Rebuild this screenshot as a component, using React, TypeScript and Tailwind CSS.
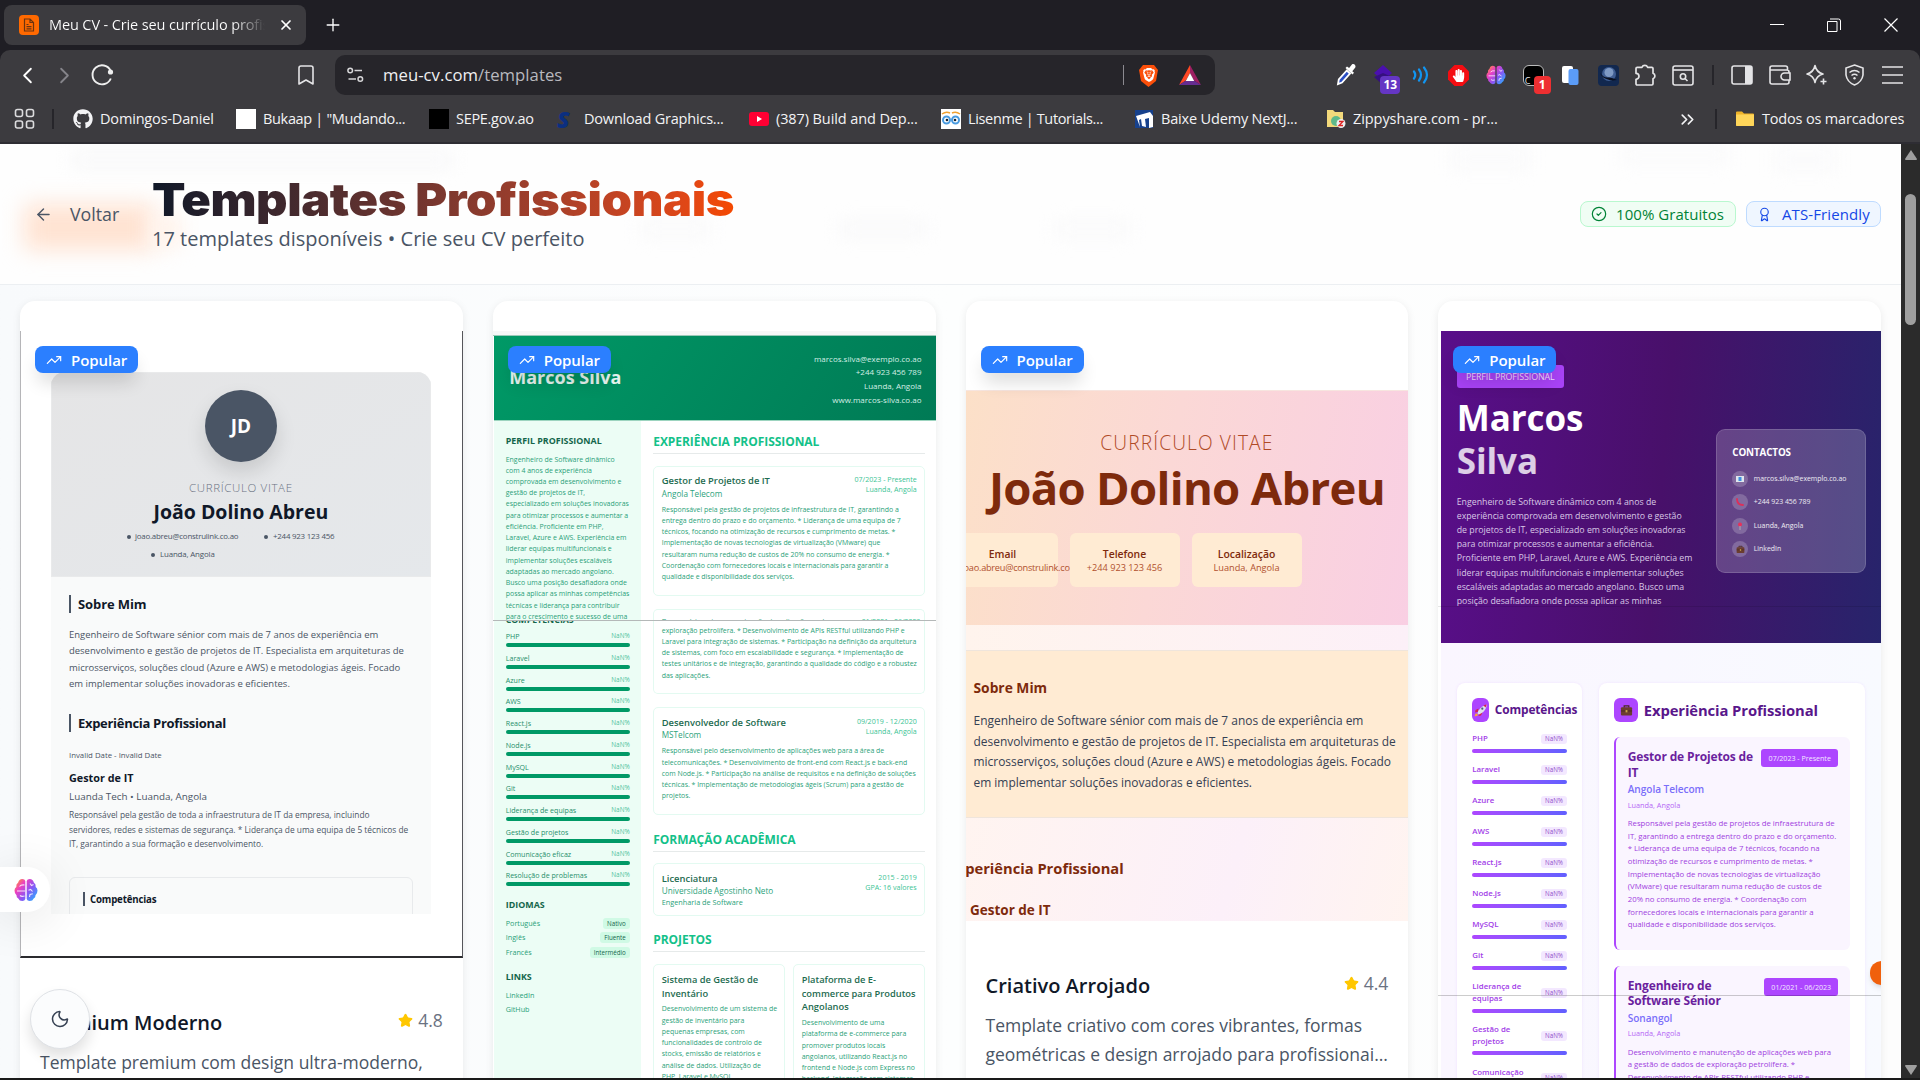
import type { ReactNode } from "react";
import {
  ArrowLeft, Award, Bookmark, ChevronLeft, ChevronRight, ChevronsRight, CircleCheck,
  Moon, Plus, Star, TrendingUp, X,
} from "lucide-react";
import { FaGithub, FaHandPaper } from "react-icons/fa";
import { SiBrave } from "react-icons/si";

/* ---------- helpers ---------- */

function Lines({ lines, className = "" }: { lines: string[]; className?: string }) {
  return (
    <div className={`whitespace-nowrap ${className}`}>
      {lines.map((l) => <div key={l}>{l}</div>)}
    </div>
  );
}

function Brain({ size }: { size: number }) {
  return (
    <svg width={size} height={size} viewBox="0 0 24 24">
      <defs>
        <linearGradient id="brain" x1="0" y1="0.1" x2="1" y2="0.9">
          <stop offset="0" stopColor="#ff9a2b" />
          <stop offset="0.28" stopColor="#ee3fc0" />
          <stop offset="0.6" stopColor="#8a55f5" />
          <stop offset="1" stopColor="#22b4ff" />
        </linearGradient>
      </defs>
      <path
        d="M11.300 3v18q-.5 2-3 2-3 0-4-2.500-2-1-1.800-3.300Q.5 15.500.5 12.500q0-2.300 1.800-3.500Q1.800 6 4.200 4.500 5 1 8.300 1q2.500 0 3 2zM12.700 3v18q.5 2 3 2 3 0 4-2.500 2-1 1.800-3.300 2-1.700 2-4.700 0-2.300-1.800-3.500.5-3-1.900-4.500Q19 1 15.700 1q-2.500 0-3 2z"
        fill="url(#brain)"
      />
      <path d="M5.500 8.500q1.500-2 5-1.500M3 13h8M6 17.500q1.500 1.500 4.500.5M16 5.500l1.500 2 2-1M18.500 13.500l-1.800-2-2.200.8M15.500 19l.5-2.500 2.800-.7" fill="none" stroke="#fff" strokeOpacity="0.85" strokeWidth="1.100" />
    </svg>
  );
}

/* ---------- browser chrome ---------- */

function TabStrip() {
  return (
    <div className="h-[50px] shrink-0 flex items-center justify-between bg-[#1f1e24] text-white">
      <div className="flex items-center pl-1">
        <div className="h-10 w-[302px] rounded-lg bg-[#3c3b3f] flex items-center pl-[15px] pr-3">
          <span className="size-5 rounded bg-[#ff6900] flex items-center justify-center">
            <svg width="12" height="14" viewBox="0 0 12 14" fill="none" stroke="#6b3410" strokeWidth="1.2">
              <path d="M1.500 1H7l3.500 3.500V13h-9zM7 1v3.500h3.500M3.500 6.500h2M3.500 8.700h5M3.500 10.800h5" />
            </svg>
          </span>
          <span className="ml-[10px] w-[216px] overflow-hidden whitespace-nowrap text-[14.5px] tracking-[-0.12px] bg-linear-to-r from-white from-85% to-transparent bg-clip-text text-transparent">
            Meu CV - Crie seu currículo profissional
          </span>
          <X className="ml-[13px] shrink-0" size={16} strokeWidth={2.6} />
        </div>
        <Plus className="ml-[17px]" size={20} strokeWidth={1.6} />
      </div>
      <div className="flex items-center pr-[22px] gap-[43px]">
        <span className="w-[14px] h-px bg-white mb-[2px]" />
        <svg width="14" height="14" viewBox="0 0 14 14" fill="none" stroke="#fff">
          <path d="M.5 3.500h9.500v10H.5zM3 1h8.500a2 2 0 0 1 2 2v9" />
        </svg>
        <svg width="14" height="14" viewBox="0 0 14 14" stroke="#fff" strokeWidth="1.2">
          <path d="M.5.500l13 13M13.500.500l-13 13" />
        </svg>
      </div>
    </div>
  );
}

function Cell({ children }: { children: ReactNode }) {
  return <div className="w-[37.5px] h-6 flex items-center justify-center">{children}</div>;
}

function Toolbar() {
  return (
    <div className="h-[50px] flex items-center">
      <ChevronLeft className="ml-[14px] text-white" size={27} strokeWidth={1.6} />
      <ChevronRight className="ml-[10px] text-[#85848a]" size={27} strokeWidth={1.6} />
      <svg className="ml-[12px]" width="24" height="24" viewBox="0 0 24 24" fill="none" stroke="#eee" strokeWidth="1.9">
        <path d="M20.500 7.500A9.500 9.500 0 1 0 20.800 15.500" />
        <circle cx="20.500" cy="9" r="2.600" fill="#eee" stroke="none" />
      </svg>
      <Bookmark className="ml-[180px] text-[#e4e4e6]" size={24} strokeWidth={1.6} />
      <div className="ml-[17px] h-10 w-[880px] rounded-[10px] bg-[#26252a] flex items-center">
        <svg className="ml-3" width="17" height="16" viewBox="0 0 17 16" fill="none" stroke="#d6d6d8" strokeWidth="1.5">
          <circle cx="3.200" cy="3.500" r="2.300" /><path d="M7.500 3.500H15" />
          <circle cx="13.300" cy="12" r="2.300" /><path d="M1.500 12H9" />
        </svg>
        <span className="ml-[19px] text-[16.7px] tracking-[0.04px] text-[#f0f0f2]">
          meu-cv.com<span className="text-[#b9b9bf]">/templates</span>
        </span>
        <span className="ml-auto w-px h-5 bg-[#8b8a90]" />
        <span className="ml-[14px] w-[21px] h-[23px] flex items-center justify-center">
          <svg width="21" height="23" viewBox="0 0 21 23" className="absolute">
            <path d="M5 1h11l4 5-2 11-7.500 6L3 17 1 6z" fill="#fb4f0a" />
          </svg>
          <SiBrave size={14} className="relative text-white" />
        </span>
        <svg className="ml-[20px] mr-[14px]" width="22" height="20" viewBox="0 0 22 20">
          <path d="M11 0 0 20l7-4.500L11 8z" fill="#ff4724" />
          <path d="M11 0l11 20-7-4.500L11 8z" fill="#9e1f63" />
          <path d="M0 20h22l-7-4.500H7z" fill="#662d91" />
          <path d="M11 8l4.200 8H6.800z" fill="#fff" />
        </svg>
      </div>
      <div className="ml-[112px] flex shrink-0 items-center text-[#e4e4e6]">
        <Cell>
          <svg width="22" height="24" viewBox="0 0 22 24">
            <path d="M3 21l.8-4.500 8-9 3.200 3-8 9z" fill="#2a4fc4" stroke="#fff" strokeWidth="1.800" />
            <path d="M10.500 5l7 6.500 1.500-1.700-1.700-1.600 3-3.700c1-2-1.200-4.300-3.200-3.200l-3 3.600L12 3.400z" fill="#fff" />
          </svg>
        </Cell>
        <Cell>
          <span className="relative">
            <svg width="22" height="20" viewBox="0 0 22 20"><path d="M11 0l9 8-9 8-9-8z" fill="#4a0fae" /><path d="M2 12l9-4 9 4-9 8z" fill="#35107f" /></svg>
            <span className="absolute left-[8px] top-[11px] w-5 h-[18px] rounded bg-[#6536c4] text-white text-[12px] font-bold leading-[18px] text-center">13</span>
          </span>
        </Cell>
        <Cell>
          <svg width="18" height="18" viewBox="0 0 18 18" fill="none" stroke="#1195f0" strokeWidth="2.200" strokeLinecap="round">
            <path d="M2 5.500q2.500 3.500 0 7M7 3.500q4 5.500 0 11M12 1.500q6 7.500 0 15" />
          </svg>
        </Cell>
        <Cell>
          <svg width="21" height="21" viewBox="0 0 21 21" className="absolute"><path d="M6.500 0h8L21 6.500v8L14.500 21h-8L0 14.500v-8z" fill="#f40d12" /></svg>
          <FaHandPaper size={13} className="relative text-white" />
        </Cell>
        <Cell><Brain size={20} /></Cell>
        <Cell>
          <span className="relative block size-[21px] rounded-md border border-[#bbb] bg-black">
            <span className="absolute left-px bottom-0 text-[9px] leading-[9px]">C</span>
            <span className="absolute left-[10px] top-[10px] w-[17px] h-[18px] rounded bg-[#ee2f31] text-white text-[12px] font-bold leading-[18px] text-center">1</span>
          </span>
        </Cell>
        <Cell>
          <svg width="17" height="19" viewBox="0 0 17 19"><rect width="11" height="17" rx="2" fill="#fff" /><rect x="6.500" y="3" width="10" height="16" rx="2" fill="#5b9cf8" /></svg>
        </Cell>
        <Cell>
          <svg width="21" height="21" viewBox="0 0 21 21">
            <rect width="21" height="21" rx="4" fill="#12284f" />
            <circle cx="11" cy="9" r="7" fill="#3f5d92" /><circle cx="11" cy="7.500" r="4.500" fill="#7f9ac4" />
            <path d="M2 8q4 5 8 4.500 4-.5 9 2.500-6 1-9-.5-6-1.500-8-6.500z" fill="#0a1020" />
          </svg>
        </Cell>
        <Cell>
          <svg width="23" height="24" viewBox="0 0 23 24" fill="none" stroke="currentColor" strokeWidth="1.700" strokeLinejoin="round">
            <path d="M2 5.500q0-1.200 1.200-1.200H8a3 3 0 0 1 5.600 0h4.200q1.200 0 1.200 1.200v4.700a3 3 0 0 1 0 5.600v5q0 1.200-1.200 1.200H3.200Q2 22 2 20.800v-4.500a3 3 0 0 0 0-6z" />
          </svg>
        </Cell>
        <Cell>
          <svg width="22" height="21" viewBox="0 0 22 21" fill="none" stroke="currentColor" strokeWidth="1.600">
            <rect x="1" y="1" width="20" height="19" rx="2" /><path d="M1 5h20" /><circle cx="11" cy="11.500" r="2.700" /><path d="M13 13.500l2.500 2.500" />
          </svg>
        </Cell>
        <span className="w-[21.5px] flex justify-center"><span className="w-[2px] h-5 bg-[#26252a]" /></span>
        <Cell>
          <svg width="22" height="20" viewBox="0 0 22 20"><rect x="1" y="1" width="20" height="18" rx="2" fill="none" stroke="currentColor" strokeWidth="1.600" /><path d="M14 1h7v18h-7z" fill="currentColor" /></svg>
        </Cell>
        <Cell>
          <svg width="22" height="20" viewBox="0 0 22 20" fill="none" stroke="currentColor" strokeWidth="1.600">
            <path d="M18.500 5V3a2 2 0 0 0-2-2H3a2 2 0 0 0-2 2v14a2 2 0 0 0 2 2h15a2 2 0 0 0 2-2v-2M1 5h17a2 2 0 0 1 2 2v1M21 8h-5.500a3.500 3.500 0 0 0 0 7H21z" />
          </svg>
        </Cell>
        <Cell>
          <svg width="22" height="22" viewBox="0 0 22 22" fill="none" stroke="currentColor" strokeWidth="1.600" strokeLinejoin="round">
            <path d="M9 1.500q1.500 7 8 8.500-6.500 1.500-8 8.500-1.500-7-8-8.500 6.500-1.500 8-8.500z" /><path d="M17.500 14.500v6M14.500 17.500h6" />
          </svg>
        </Cell>
        <Cell>
          <svg width="21" height="22" viewBox="0 0 21 22" fill="none" stroke="currentColor" strokeWidth="1.600">
            <path d="M10.500 1 19 4v7q-1 7-8.500 10Q3 18 2 11V4z" /><path d="M5.500 8.500q5-4 10 0M7.500 11.500q3-2.400 6 0" /><circle cx="10.500" cy="14.300" r="1.200" fill="currentColor" stroke="none" />
          </svg>
        </Cell>
        <Cell>
          <svg width="21" height="18" viewBox="0 0 21 18" stroke="currentColor" strokeWidth="1.600"><path d="M0 1h21M0 9h21M0 17h21" /></svg>
        </Cell>
      </div>
    </div>
  );
}

function Mark({ icon, label, className }: { icon: ReactNode; label: string; className: string }) {
  return (
    <div className={`flex shrink-0 items-center whitespace-nowrap ${className}`}>
      <span className="w-[27px] shrink-0 flex">{icon}</span>
      {label}
    </div>
  );
}

function BookmarksBar() {
  return (
    <div className="h-[42px] flex items-center pb-1 text-[14.5px] tracking-[-0.17px] text-[#f3f3f5]">
      <svg className="ml-[14px]" width="22" height="22" viewBox="0 0 22 22" fill="none" stroke="#dcdcde" strokeWidth="1.600">
        <rect x="1.500" y="1.500" width="7" height="7" rx="2" /><rect x="12.500" y="1.500" width="7" height="7" rx="2" />
        <rect x="1.500" y="13" width="7" height="7" rx="2" /><rect x="12.500" y="13" width="7" height="7" rx="2" />
      </svg>
      <span className="ml-4 w-[2px] h-5 bg-[#26252a]" />
      <Mark className="ml-[19px] w-[163px]" label="Domingos-Daniel" icon={<FaGithub size={20} />} />
      <Mark className="w-[193px] tracking-[-0.33px]" label={'Bukaap | "Mudando...'} icon={<span className="size-5 bg-white" />} />
      <Mark className="w-[128px] tracking-[-0.3px]" label="SEPE.gov.ao" icon={<span className="size-5 bg-black" />} />
      <Mark className="w-[192px] tracking-[-0.2px]" label="Download Graphics..." icon={<span className="w-5 text-[23px] leading-5 font-extrabold italic text-[#0b2f80]">S</span>} />
      <Mark className="w-[192px] tracking-[-0.1px]" label="(387) Build and Dep..." icon={
        <svg width="20" height="20" viewBox="0 0 20 20"><rect y="3" width="20" height="14" rx="3" fill="#ff0033" /><path d="M8 7l5 3-5 3z" fill="#fff" /></svg>
      } />
      <Mark className="w-[193px] tracking-[-0.35px]" label="Lisenme | Tutorials..." icon={
        <svg width="20" height="20" viewBox="0 0 20 20">
          <rect width="20" height="20" fill="#fff" />
          <path d="M1 5q4-3 8-1M11 4q4-2 8 1" stroke="#f0a030" strokeWidth="1.500" fill="none" />
          <circle cx="5.500" cy="11" r="3.500" fill="#fff" stroke="#4a9be0" strokeWidth="2" /><circle cx="14.500" cy="11" r="3.500" fill="#fff" stroke="#4a9be0" strokeWidth="2" />
          <circle cx="6" cy="11" r="1.300" fill="#123" /><circle cx="14" cy="11" r="1.300" fill="#123" />
        </svg>
      } />
      <Mark className="w-[192px]" label="Baixe Udemy NextJ..." icon={
        <svg width="20" height="20" viewBox="0 0 20 20"><rect x="1" y="1" width="18" height="18" fill="#17418c" /><path d="M2 7l14-4 3 4v11l-4 1V9l-4 1 1 8-4-1-1-7-2 1 1 7z" fill="#fff" /></svg>
      } />
      <Mark className="w-[356px] tracking-[-0.07px]" label="Zippyshare.com - pr..." icon={
        <svg width="20" height="20" viewBox="0 0 20 20">
          <path d="M1 1h6l2 2h8v15H1z" fill="#f3d97b" /><circle cx="10" cy="12" r="5" fill="#5fb98a" /><circle cx="15" cy="14.500" r="4.500" fill="#eee" /><path d="M13 12.500h4l-4 4h4" stroke="#d22" strokeWidth="1.300" fill="none" />
        </svg>
      } />
      <ChevronsRight className="-ml-[5px]" size={21} strokeWidth={1.9} />
      <span className="ml-[17px] w-[2px] h-5 bg-[#26252a]" />
      <Mark className="ml-[18px]" label="Todos os marcadores" icon={
        <svg width="20" height="20" viewBox="0 0 20 20"><path d="M1 3.500q0-1 1-1h5l2 2h9q1 0 1 1V16q0 1-1 1H2q-1 0-1-1z" fill="#f0b429" /><path d="M1 5.500h18V16q0 1-1 1H2q-1 0-1-1z" fill="#ffd65a" /></svg>
      } />
    </div>
  );
}

/* ---------- page header ---------- */

function PageHeader() {
  return (
    <header className="relative h-[141px] shrink-0 overflow-hidden border-b border-[#eceff2] bg-[#fefefe] flex items-center justify-between px-5">
      <div className="absolute left-[24px] top-[60px] w-[130px] h-[46px] bg-[#ffe3d2] blur-[11px]" />
      <div className="absolute left-[150px] top-[70px] w-[32px] h-[34px] bg-[#fff3eb] blur-[10px]" />
      <div className="absolute left-[72px] top-[8px] w-[380px] h-[16px] bg-[#f8f8f9] blur-[9px]" />
      <div className="absolute left-[640px] top-[78px] w-[70px] h-[14px] bg-[#f9f9fa] blur-[9px]" />
      <div className="absolute left-[840px] top-[78px] w-[85px] h-[14px] bg-[#f8f8f9] blur-[9px]" />
      <div className="absolute left-[1055px] top-[78px] w-[75px] h-[14px] bg-[#f9f9fa] blur-[9px]" />
      <div className="absolute left-[1450px] top-[6px] w-[80px] h-[18px] bg-[#fafafb] blur-[9px]" />
      <div className="absolute left-[1620px] top-[4px] w-[110px] h-[14px] bg-[#fafafb] blur-[9px]" />
      <div className="absolute left-[1775px] top-[6px] w-[60px] h-[20px] bg-[#fafafb] blur-[9px]" />
      <div className="relative flex items-center">
        <button className="flex items-center pl-[14px] text-[17.8px] text-[#4a5565]">
          <ArrowLeft size={19} strokeWidth={1.8} />
          <span className="ml-[17px] w-[82px] text-left">Voltar</span>
        </button>
        <div className="whitespace-nowrap">
          <h1 className="w-[537px] h-[48px] leading-[48px] origin-left scale-x-[1.085] font-['Inter'] font-black text-[45px] tracking-[-0.4px] bg-linear-to-r from-[#101828] to-[#f54900] bg-clip-text text-transparent">
            Templates Profissionais
          </h1>
          <p className="text-[20px] leading-[29px] text-[#4a5565]">17 templates disponíveis • Crie seu CV perfeito</p>
        </div>
      </div>
      <div className="relative flex gap-[10px] text-[15px] font-medium">
        <span className="h-[26px] w-[156px] rounded-lg border border-[#b9f8cf] bg-[#f0fdf4] text-[#008236] flex items-center pl-[10px]">
          <CircleCheck size={16} strokeWidth={1.8} /><span className="ml-[9px] tracking-[0.05px]">100% Gratuitos</span>
        </span>
        <span className="h-[26px] w-[135px] rounded-lg border border-[#bedbff] bg-[#eff6ff] text-[#1447e6] flex items-center pl-[10px]">
          <Award size={15} strokeWidth={1.8} /><span className="ml-[10px] tracking-[0.1px]">ATS-Friendly</span>
        </span>
      </div>
    </header>
  );
}

/* ---------- template cards ---------- */

function Card({ children }: { children: ReactNode }) {
  return (
    <article className="relative h-[850px] min-w-0 overflow-hidden rounded-[15px] bg-white pt-[30px] shadow-[0_2px_8px_rgba(0,0,0,0.08)]">
      {children}
      <span className="absolute left-[15px] top-[45px] w-[103px] h-[27px] rounded-lg bg-[#2b7fff] text-white text-[15px] font-semibold tracking-[-0.05px] flex items-center pl-[11px] shadow-[0_12px_18px_-3px_rgba(0,0,0,0.14)]">
        <TrendingUp size={16} strokeWidth={1.8} /><span className="ml-[9px] pt-px">Popular</span>
      </span>
    </article>
  );
}

function Info({ title, rating, lines }: { title: string; rating: string; lines: string[] }) {
  return (
    <div className="px-5 pt-[49px]">
      <div className="flex h-[30px] items-center justify-between">
        <h3 className="pt-[2px] text-[20px] font-semibold text-[#101828] whitespace-nowrap">{title}</h3>
        <span className="flex items-center gap-[5px] pb-1 text-[17.5px] text-[#6a7282]">
          <Star size={15} fill="#ffc700" stroke="#ffc700" />{rating}
        </span>
      </div>
      <Lines className="mt-[11px] text-[17.5px] leading-[28.8px] text-[#4a5565]" lines={lines} />
    </div>
  );
}

function PremiumCard() {
  return (
    <Card>
      <div className="h-[627px] border-l border-l-[#b5b5b8] border-r border-r-[#55555a] border-b-[2px] border-b-[#2b2b2e] pt-[41px] pl-[30px] pr-[31px]">
        <div className="h-[542px] overflow-hidden rounded-t-[14px] bg-[#f9fafa] text-[#4a5565]">
          <div className="h-[205px] bg-linear-to-br from-[#e5e5e6] to-[#e5e8eb] pt-[18px] shadow-[inset_0_0_0_1px_#e9eaeb]">
            <div className="mx-auto size-[72px] rounded-full bg-[#4a5565] text-white font-bold text-[19px] pt-px flex items-center justify-center shadow-[0_10px_20px_rgba(0,0,0,0.13)]">JD</div>
            <div className="mt-[18px] h-4 leading-4 text-center text-[11.5px] font-light tracking-[0.65px] text-[#6a7282]">CURRÍCULO VITAE</div>
            <div className="h-[30px] leading-[32px] text-center text-[19.5px] font-bold text-[#101828] whitespace-nowrap">João Dolino Abreu</div>
            <div className="mt-[2px] h-[18px] flex items-center text-[7.9px] tracking-[-0.22px] whitespace-nowrap pl-[76px]">
              <span className="size-[4px] rounded-full bg-[#4a5565]" /><span className="ml-1 w-[129px]">joao.abreu@construlink.co.ao</span>
              <span className="size-[4px] rounded-full bg-[#4a5565]" /><span className="ml-[5px]">+244 923 123 456</span>
            </div>
            <div className="h-[18px] flex items-center text-[7.9px] tracking-[-0.15px] whitespace-nowrap pl-[100px]">
              <span className="size-[4px] rounded-full bg-[#4a5565]" /><span className="ml-[5px]">Luanda, Angola</span>
            </div>
          </div>
          <div className="pl-[18px] whitespace-nowrap">
            <div className="mt-[18px] h-[18px] leading-[19px] border-l-2 border-[#4a5565] pl-[7px] text-[13px] tracking-[-0.1px] font-bold text-[#101828]">Sobre Mim</div>
            <Lines className="mt-[14px] text-[9.48px] leading-[16.3px]" lines={[
              "Engenheiro de Software sénior com mais de 7 anos de experiência em",
              "desenvolvimento e gestão de projetos de IT. Especialista em arquiteturas de",
              "microsserviços, soluções cloud (Azure e AWS) e metodologias ágeis. Focado",
              "em implementar soluções inovadoras e eficientes.",
            ]} />
            <div className="mt-[22px] h-[18px] leading-[19px] border-l-2 border-[#4a5565] pl-[7px] text-[13px] tracking-[-0.3px] font-bold text-[#101828]">Experiência Profissional</div>
            <div className="mt-[17px] text-[7.8px] leading-[12px] font-medium">Invalid Date - Invalid Date</div>
            <div className="mt-[9px] text-[10.8px] leading-4 font-bold text-[#101828]">Gestor de IT</div>
            <div className="mt-[3px] text-[9.85px] leading-[14px] font-medium">Luanda Tech • Luanda, Angola</div>
            <Lines className="mt-[5px] text-[8.37px] leading-[14.6px]" lines={[
              "Responsável pela gestão de toda a infraestrutura de IT da empresa, incluindo",
              "servidores, redes e sistemas de segurança. * Liderança de uma equipa de 5 técnicos de",
              "IT, garantindo a sua formação e desenvolvimento.",
            ]} />
            <div className="mt-[25.5px] w-[344px] h-[60px] rounded-md border border-[#e8eaec] pt-[14px] pl-[13px]">
              <div className="h-[14px] leading-[15px] border-l-2 border-[#4a5565] pl-[5px] text-[9.7px] tracking-[-0.18px] font-bold text-[#101828]">Competências</div>
            </div>
          </div>
        </div>
      </div>
      <Info title="Premium Moderno" rating="4.8" lines={["Template premium com design ultra-moderno,", "elegante e sofisticado para executivos"]} />
    </Card>
  );
}

const skills = ["PHP", "Laravel", "Azure", "AWS", "React.js", "Node.js", "MySQL", "Git", "Liderança de equipas", "Gestão de projetos", "Comunicação eficaz", "Resolução de problemas"];
const idiomas = [["Português", "Nativo"], ["Inglês", "Fluente"], ["Francês", "Intermédio"]];

function GreenHeading({ children, className }: { children: string; className: string }) {
  return (
    <div className={`h-[21px] border-b border-[#e6eaea] text-[12px] leading-[17px] tracking-[-0.06px] font-bold text-[#13c189] ${className}`}>{children}</div>
  );
}

function GreenEntry({ title, sub, extra, date, place, lines, className }: {
  title: string; sub: string; extra?: string; date: string; place: string; lines?: string[]; className: string;
}) {
  return (
    <div className={`rounded-[5px] border border-[#e3faf1] pl-[7.5px] pr-[7.5px] ${className}`}>
      <div className="flex justify-between">
        <div className="pt-[8.5px]">
          <div className="text-[9.4px] leading-[12px] font-semibold text-[#1d6b50]">{title}</div>
          <div className="mt-[0.5px] text-[8.2px] leading-[12px] font-medium text-[#2da37c]">{sub}</div>
          {extra && <div className="text-[7.3px] leading-[10px]">{extra}</div>}
        </div>
        <div className="pt-[7.5px] text-right text-[7.1px] leading-[10px] text-[#3bc495]">
          <div className="font-medium">{date}</div>
          <div>{place}</div>
        </div>
      </div>
      {lines && <Lines className="mt-[4px] text-[6.95px] leading-[11.25px]" lines={lines} />}
    </div>
  );
}

function GreenCard() {
  return (
    <Card>
      <div className="h-[5px] bg-[#f6f7f7] border-b border-[#9cc9b9]" />
      <div className="ml-px h-[85px] border-b border-[#9cd4bf] bg-[linear-gradient(125deg,#009966,#007a55)] flex justify-between pl-[15.5px] pr-[14px] text-white">
        <div className="pt-[29px] text-[18px] leading-[24px] font-bold text-white/90">Marcos Silva</div>
        <Lines className="pt-[15.500px] text-right text-[8px] leading-[13.8px] text-[#d3efe5]" lines={["marcos.silva@exemplo.co.ao", "+244 923 456 789", "Luanda, Angola", "www.marcos-silva.co.ao"]} />
      </div>
      <div className="h-[199px] overflow-hidden flex text-[#2a9f79] whitespace-nowrap">
        <div className="ml-px w-[147px] shrink-0 bg-[#ecfdf5] pt-[13px] pl-[12px]">
          <div className="text-[8.9px] leading-[13px] h-[12px] font-bold text-[#14664b]">PERFIL PROFISSIONAL</div>
          <Lines className="mt-[7.500px] text-[6.95px] leading-[11.23px]" lines={[
            "Engenheiro de Software dinâmico", "com 4 anos de experiência", "comprovada em desenvolvimento e", "gestão de projetos de IT,",
            "especializado em soluções inovadoras", "para otimizar processos e aumentar a", "eficiência. Proficiente em PHP,", "Laravel, Azure e AWS. Experiência em",
            "liderar equipas multifuncionais e", "implementar soluções escaláveis", "adaptadas ao mercado angolano.", "Busco uma posição desafiadora onde",
            "possa aplicar as minhas competências", "técnicas e liderança para contribuir", "para o crescimento e sucesso de uma",
          ]} />
        </div>
        <div className="ml-[12.5px] w-[272px]">
          <GreenHeading className="mt-[12px]">EXPERIÊNCIA PROFISSIONAL</GreenHeading>
          <GreenEntry className="mt-[11.5px] h-[130.5px]" title="Gestor de Projetos de IT" sub="Angola Telecom" date="07/2023 - Presente" place="Luanda, Angola" lines={[
            "Responsável pela gestão de projetos de infraestrutura de IT, garantindo a",
            "entrega dentro do prazo e do orçamento. * Liderança de uma equipa de 7",
            "técnicos, focando na otimização de recursos e cumprimento de metas. *",
            "Implementação de novas tecnologias de virtualização (VMware) que",
            "resultaram numa redução de custos de 20% no consumo de energia. *",
            "Coordenação com fornecedores locais e internacionais para garantir a",
            "qualidade e disponibilidade dos serviços.",
          ]} />
          <div className="mt-[12.5px] h-[13px] rounded-t-[5px] border border-b-0 border-[#e3faf1] px-[7.5px] overflow-hidden">
            <div className="mt-[6px] flex justify-between text-[6.95px] leading-[11.25px]">
              <span>Desenvolvimento e manutenção de aplicações web para a ges</span><span className="text-[#3bc495]">01/2021 - 06/2023</span>
            </div>
          </div>
        </div>
      </div>
      <div className="h-px bg-[#b4b8b8]" />
      <div className="h-[520px] flex text-[#2a9f79] whitespace-nowrap">
        <div className="ml-px w-[147px] shrink-0 bg-[#ecfdf5] pl-[12px] pr-[11px]">
          <div className="h-[9px] overflow-hidden"><div className="-mt-[7px] text-[8.8px] leading-[12px] font-bold text-[#14664b]">COMPETÊNCIAS</div></div>
          {skills.map((s) => (
            <div key={s} className="h-[21.75px]">
              <div className="flex justify-between text-[7.1px] leading-[12.6px] h-[12px] font-medium text-[#1f8f6b]"><span>{s}</span><span className="text-[6.4px] font-normal text-[#4fc29c]">NaN%</span></div>
              <div className="mt-px h-[4px] rounded-full bg-[#009966]" />
            </div>
          ))}
          <div className="mt-[8px] text-[8.9px] leading-[12px] font-bold text-[#14664b]">IDIOMAS</div>
          <div className="mt-[5px]">
            {idiomas.map(([l, n]) => (
              <div key={l} className="h-[14.6px] flex items-center justify-between text-[7.2px]">
                <span>{l}</span><span className="h-[11px] leading-[11px] rounded-[3px] bg-[#d0fae5] px-1 text-[6.2px] font-medium text-[#14664b]">{n}</span>
              </div>
            ))}
          </div>
          <div className="mt-[11px] text-[8.9px] leading-[12px] font-bold text-[#14664b]">LINKS</div>
          <Lines className="mt-[5px] text-[7.2px] leading-[14px]" lines={["LinkedIn", "GitHub"]} />
        </div>
        <div className="ml-[12.5px] w-[272px]">
          <div className="h-[73.3px] rounded-b-[5px] border border-t-0 border-[#e3faf1] pl-[7.5px] pt-[3.7px]">
            <Lines className="text-[6.95px] leading-[11.25px]" lines={[
              "exploração petrolífera. * Desenvolvimento de APIs RESTful utilizando PHP e",
              "Laravel para integração de sistemas. * Participação na definição da arquitetura",
              "de sistemas, com foco em escalabilidade e segurança. * Implementação de",
              "testes unitários e de integração, garantindo a qualidade do código e a robustez",
              "das aplicações.",
            ]} />
          </div>
          <GreenEntry className="mt-[13px] h-[107.4px]" title="Desenvolvedor de Software" sub="MSTelcom" date="09/2019 - 12/2020" place="Luanda, Angola" lines={[
            "Responsável pelo desenvolvimento de aplicações web para a área de",
            "telecomunicações. * Desenvolvimento de front-end com React.js e back-end",
            "com Node.js. * Participação na análise de requisitos e na definição de soluções",
            "técnicas. * Implementação de metodologias ágeis (Scrum) para a gestão de",
            "projetos.",
          ]} />
          <GreenHeading className="mt-[16.3px]">FORMAÇÃO ACADÊMICA</GreenHeading>
          <GreenEntry className="mt-[11.5px] h-[52.2px]" title="Licenciatura" sub="Universidade Agostinho Neto" extra="Engenharia de Software" date="2015 - 2019" place="GPA: 16 valores" />
          <GreenHeading className="mt-[15.5px]">PROJETOS</GreenHeading>
          <div className="mt-[12px] grid grid-cols-2 gap-2">
            <div className="h-[160px] rounded-[5px] border border-[#e3faf1] pl-[7.5px] pt-[7.6px]">
              <Lines className="text-[9.3px] leading-[13.8px] font-semibold text-[#1d6b50]" lines={["Sistema de Gestão de", "Inventário"]} />
              <Lines className="mt-[3px] text-[6.95px] leading-[11.25px]" lines={["Desenvolvimento de um sistema de", "gestão de inventário para", "pequenas empresas, com", "funcionalidades de controlo de", "stocks, emissão de relatórios e", "análise de dados. Utilização de", "PHP, Laravel e MySQL."]} />
            </div>
            <div className="h-[160px] rounded-[5px] border border-[#e3faf1] pl-[7.5px] pt-[7.6px]">
              <Lines className="text-[9.3px] leading-[13.8px] font-semibold text-[#1d6b50]" lines={["Plataforma de E-", "commerce para Produtos", "Angolanos"]} />
              <Lines className="mt-[3px] text-[6.95px] leading-[11.25px]" lines={["Desenvolvimento de uma", "plataforma de e-commerce para", "promover produtos locais", "angolanos, utilizando React.js no", "frontend e Node.js com Express no", "backend. Integração com sistemas"]} />
            </div>
          </div>
        </div>
      </div>
    </Card>
  );
}

function ContactTile({ label, value, className = "text-center" }: { label: string; value: string; className?: string }) {
  return (
    <div className="relative w-[110px] h-[54px] shrink-0 rounded-md bg-[#ffebd3] pt-[14px] whitespace-nowrap leading-[14px]">
      <div className="text-center text-[10.4px] font-semibold text-[#7e2a0c]">{label}</div>
      <div className={`text-[9.2px] text-[#b1502e] ${className}`}>{value}</div>
    </div>
  );
}

function CreativeCard() {
  return (
    <Card>
      <div className="h-[590px] overflow-hidden pt-[59px] whitespace-nowrap">
        <div className="h-[235px] border-t border-[#f7e5df] bg-[linear-gradient(100deg,#fce0c8_0%,#fbd8d6_45%,#f9cfe3_100%)] pt-[36px]">
          <div className="h-[30px] leading-[31px] text-center text-[19.2px] font-light tracking-[1.1px] text-[#b04a26]">CURRÍCULO VITAE</div>
          <div className="h-[58px] leading-[60px] flex justify-center text-[45.5px] font-bold tracking-[-0.7px] text-[#7e2a0c]">João Dolino Abreu</div>
          <div className="mt-[18px] -ml-[18px] flex gap-3">
            <ContactTile label="Email" value="joao.abreu@construlink.co.ao" className="pl-[14px] tracking-[-0.25px]" />
            <ContactTile label="Telefone" value="+244 923 123 456" />
            <ContactTile label="Localização" value="Luanda, Angola" />
          </div>
        </div>
        <div className="h-[25px] bg-linear-to-r from-[#fff4ed] to-[#fcf0f8]" />
        <div className="h-[168px] border-y border-[#efe5dc] bg-[#ffebd3] pl-[8px] pt-[27px]">
          <div className="text-[13.8px] leading-5 font-bold text-[#7e2a0c]">Sobre Mim</div>
          <Lines className="mt-[13px] text-[11.95px] leading-[20.7px] text-[#364153]" lines={[
            "Engenheiro de Software sénior com mais de 7 anos de experiência em",
            "desenvolvimento e gestão de projetos de IT. Especialista em arquiteturas de",
            "microsserviços, soluções cloud (Azure e AWS) e metodologias ágeis. Focado",
            "em implementar soluções inovadoras e eficientes.",
          ]} />
        </div>
        <div className="h-[103px] bg-[linear-gradient(105deg,#fff4f0_0%,#fcf0f9_60%,#fff4f0_100%)] pt-[40px] font-bold text-[#7e2a0c]">
          <div className="-ml-[17px] text-[14.7px] leading-5">Experiência Profissional</div>
          <div className="mt-[22.5px] pl-[4.5px] text-[13.5px] leading-[18px]">Gestor de IT</div>
        </div>
      </div>
      <Info title="Criativo Arrojado" rating="4.4" lines={["Template criativo com cores vibrantes, formas", "geométricas e design arrojado para profissionai..."]} />
    </Card>
  );
}

const purpleSkills = [["PHP"], ["Laravel"], ["Azure"], ["AWS"], ["React.js"], ["Node.js"], ["MySQL"], ["Git"], ["Liderança de", "equipas"], ["Gestão de", "projetos"], ["Comunicação", "eficaz"]];

function Briefcase({ size }: { size: number }) {
  return (
    <svg width={size} height={size} viewBox="0 0 14 14">
      <path d="M4.500 4V2h5v2" fill="none" stroke="#4a2a22" strokeWidth="1.300" />
      <rect x="1" y="3.500" width="12" height="9" rx="1.200" fill="#6b3d30" /><path d="M1 7.500h12" stroke="#4a2a22" /><rect x="6" y="6.500" width="2" height="2.500" fill="#c9a54b" />
    </svg>
  );
}

const contacts: { text: string; icon: ReactNode }[] = [
  { text: "marcos.silva@exemplo.co.ao", icon: <svg width="8" height="8" viewBox="0 0 8 8"><rect y="1" width="8" height="6" fill="#dfe6ee" /><rect x="2.500" y="2" width="3" height="4" fill="#3d8fe0" /></svg> },
  { text: "+244 923 456 789", icon: <svg width="8" height="8" viewBox="0 0 8 8"><path d="M1 1q0 6 6 6" fill="none" stroke="#dd2e5a" strokeWidth="1.800" strokeLinecap="round" /></svg> },
  { text: "Luanda, Angola", icon: <svg width="8" height="8" viewBox="0 0 8 8"><circle cx="4" cy="2.500" r="2" fill="#e8305a" /><path d="M4 4v4" stroke="#bbb" strokeWidth="0.800" /></svg> },
  { text: "LinkedIn", icon: <Briefcase size={9} /> },
];

function PurpleEntry({ title, company, date, badge, lines, className }: {
  title: string[]; company: string; date: string; badge: string; lines: string[]; className: string;
}) {
  return (
    <div className={`w-[236px] rounded-md border-l-2 border-[#ad46ff] bg-[#faf5ff] pl-[11.5px] pr-[12px] pt-[12px] whitespace-nowrap ${className}`}>
      <div className="flex justify-between">
        <Lines className="text-[12px] leading-[15.5px] font-bold tracking-[-0.15px] text-[#6b1f9e]" lines={title} />
        <span className={`shrink-0 h-[18px] leading-[18px] rounded-[3px] bg-[#ad46ff] text-center text-[7.1px] font-medium text-[#f3e8ff] ${badge}`}>{date}</span>
      </div>
      <div className="mt-[2px] text-[10.1px] leading-[14px] font-semibold tracking-[-0.05px] text-[#7a6ffa]">{company}</div>
      <div className="mt-[2.5px] text-[7.3px] leading-[12px] text-[#b566f5]">Luanda, Angola</div>
      <Lines className="mt-[6.5px] text-[7.77px] leading-[12.65px] text-[#a040e0]" lines={lines} />
    </div>
  );
}

function PurpleCard() {
  return (
    <Card>
      <div className="ml-[3px] h-[312px] bg-[linear-gradient(95deg,#590e8a_0%,#48106a_50%,#27246b_100%)] flex whitespace-nowrap">
        <div className="w-[275px] shrink-0 pl-[15.5px] pt-[34px]">
          <div className="w-[107px] h-[22.5px] leading-[23px] rounded-[3px] bg-[#a943f8] text-center text-[8.9px] tracking-[-0.1px] text-[#eedcff]">PERFIL PROFISSIONAL</div>
          <div className="mt-[8px] text-[35px] leading-[43.8px] font-bold tracking-[-0.1px] text-white">Marcos<br /><span className="text-white/80">Silva</span></div>
          <Lines className="mt-[11.5px] text-[8.77px] leading-[14.2px] text-[#d9c8e6]" lines={[
            "Engenheiro de Software dinâmico com 4 anos de", "experiência comprovada em desenvolvimento e gestão", "de projetos de IT, especializado em soluções inovadoras",
            "para otimizar processos e aumentar a eficiência.", "Proficiente em PHP, Laravel, Azure e AWS. Experiência em", "liderar equipas multifuncionais e implementar soluções",
            "escaláveis adaptadas ao mercado angolano. Busco uma", "posição desafiadora onde possa aplicar as minhas",
          ]} />
        </div>
        <div className="mt-[98px] w-[150px] h-[143.5px] rounded-[9px] border border-white/15 bg-white/20 pl-[15px] pt-[15.5px] text-white">
          <div className="text-[9.8px] leading-[14px] font-bold tracking-[-0.1px]">CONTACTOS</div>
          <div className="mt-[8px]">
            {contacts.map((c) => (
              <div key={c.text} className="h-[23.3px] flex items-center text-[6.9px] text-white/90">
                <span className="mr-[5.5px] size-4 rounded-full bg-white/20 flex items-center justify-center">{c.icon}</span>{c.text}
              </div>
            ))}
          </div>
        </div>
      </div>
      <div className="ml-[3px] h-[520px] bg-linear-to-r from-[#faf6ff] to-[#f8faff] flex gap-[17px] pl-4 pt-[40px]">
        <div className="w-[125px] shrink-0 rounded-t-[8px] bg-white pl-[15px] pt-[15px] shadow-[0_0_3px_rgba(173,70,255,0.12)]">
          <div className="h-6 flex items-center">
            <span className="w-[17px] h-6 shrink-0 rounded-md bg-[#ad46ff] flex items-center justify-center">
              <svg width="13" height="13" viewBox="0 0 13 13">
                <path d="M4.500 4.500L1.500 6 1 8.500l3-.8zM8.500 8.500L7 11.500l-2.500.5.800-3z" fill="#d3244f" />
                <path d="M3.500 9.500q1-6 9-9 .5 1-.5 3.500-2 4.500-7 6.500z" fill="#dfe4ea" />
                <path d="M9.500 1.500q1.500-.8 3-1 0 1.500-1 3z" fill="#d3244f" />
                <circle cx="8.300" cy="4.700" r="1.100" fill="#4a5f7a" />
                <path d="M.5 12.500l1-3 2 .2.300 1.800z" fill="#ffab2e" />
              </svg>
            </span>
            <span className="ml-[5.5px] text-[11.9px] tracking-[-0.12px] font-bold text-[#59168b]">Competências</span>
          </div>
          <div className="mt-[11px] w-[94.5px] whitespace-nowrap">
            {purpleSkills.map((s) => (
              <div key={s[0]} className="pb-[11.15px]">
                <div className="flex items-center justify-between">
                  <Lines className="text-[7.9px] leading-[11.85px] font-semibold text-[#a23de8]" lines={s} />
                  <span className="w-[25.5px] h-[10px] leading-[10px] rounded-[3px] bg-[#f3e8ff] text-center text-[6.2px] text-[#9150c9]">NaN%</span>
                </div>
                <div className="mt-[4px] h-[4px] rounded-full bg-linear-to-r from-[#ad46ff] to-[#615fff]" />
              </div>
            ))}
          </div>
        </div>
        <div className="w-[266px] shrink-0 rounded-t-[8px] bg-white pl-[15px] pt-[15px] shadow-[0_0_3px_rgba(173,70,255,0.12)]">
          <div className="h-6 flex items-center">
            <span className="w-[23.5px] h-6 rounded-md bg-[#ad46ff] flex items-center justify-center"><Briefcase size={13} /></span>
            <span className="ml-[6px] text-[14.8px] font-bold tracking-[-0.1px] text-[#59168b]">Experiência Profissional</span>
          </div>
          <PurpleEntry className="mt-[15px] h-[212.5px]" title={["Gestor de Projetos de", "IT"]} company="Angola Telecom" date="07/2023 - Presente" badge="w-[77px]" lines={[
            "Responsável pela gestão de projetos de infraestrutura de", "IT, garantindo a entrega dentro do prazo e do orçamento.", "* Liderança de uma equipa de 7 técnicos, focando na",
            "otimização de recursos e cumprimento de metas. *", "Implementação de novas tecnologias de virtualização", "(VMware) que resultaram numa redução de custos de",
            "20% no consumo de energia. * Coordenação com", "fornecedores locais e internacionais para garantir a", "qualidade e disponibilidade dos serviços.",
          ]} />
          <PurpleEntry className="mt-[16.2px] h-[230px]" title={["Engenheiro de", "Software Sénior"]} company="Sonangol" date="01/2021 - 06/2023" badge="w-[74px]" lines={[
            "Desenvolvimento e manutenção de aplicações web para", "a gestão de dados de exploração petrolífera. *", "Desenvolvimento de APIs RESTful utilizando PHP e",
          ]} />
        </div>
      </div>
      {/* page-break rules of the preview */}
      <div className="absolute inset-x-0 top-[305px] h-px bg-black/10" />
      <div className="absolute inset-x-0 top-[694px] h-px bg-black/20" />
      <div className="absolute -right-[12px] top-[660px] size-[23.5px] rounded-full bg-[#f0600c] shadow-md" />
    </Card>
  );
}

/* ---------- app ---------- */

export default function App() {
  return (
    <div className="w-[1920px] h-[1080px] overflow-hidden flex flex-col bg-[#1f1e24] font-['Open_Sans','Noto_Sans',sans-serif]">
      <TabStrip />
      <div className="h-[94px] shrink-0 rounded-t-[10px] border-b-2 border-[#2e2d33] bg-[#3c3b3f]">
        <Toolbar />
        <BookmarksBar />
      </div>
      <div className="h-[934px] shrink-0 flex">
        <div className="relative w-[1901px] overflow-hidden flex flex-col bg-linear-to-r from-[#f8fafc] via-[#fdfefe] to-[#fdfdfd]">
          <PageHeader />
          <main className="grid grid-cols-4 gap-[30px] px-5 pt-[16px]">
            <PremiumCard />
            <GreenCard />
            <CreativeCard />
            <PurpleCard />
          </main>
          {/* floating buttons */}
          <div className="absolute left-0 top-[723px] w-[50px] h-[45px] rounded-r-full bg-white flex items-center pl-[14px] shadow-[0_6px_50px_rgba(0,0,0,0.12)]"><Brain size={24} /></div>
          <button className="absolute left-[30px] top-[845px] size-[60px] rounded-full border border-[#dfe2e6] bg-[#fbfcfd] text-[#364153] flex items-center justify-center shadow-[0_8px_14px_rgba(0,0,0,0.12)]">
            <Moon size={20} strokeWidth={1.8} />
          </button>
        </div>
        <div className="w-[19px] bg-[#2b2b2b] flex flex-col items-center pt-[6px] pb-[3px]">
          <svg width="12" height="10" viewBox="0 0 12 10"><path d="M6 0l6 9q0 1-1 1H1q-1 0-1-1z" fill="#9f9f9f" /></svg>
          <div className="mt-[34px] w-[11px] h-[131px] rounded-full bg-[#9f9f9f]" />
          <svg className="mt-auto" width="12" height="10" viewBox="0 0 12 10"><path d="M6 10L0 1q0-1 1-1h10q1 0 1 1z" fill="#9f9f9f" /></svg>
        </div>
      </div>
      <div className="h-[2px] bg-[#1a1a1a]" />
    </div>
  );
}
